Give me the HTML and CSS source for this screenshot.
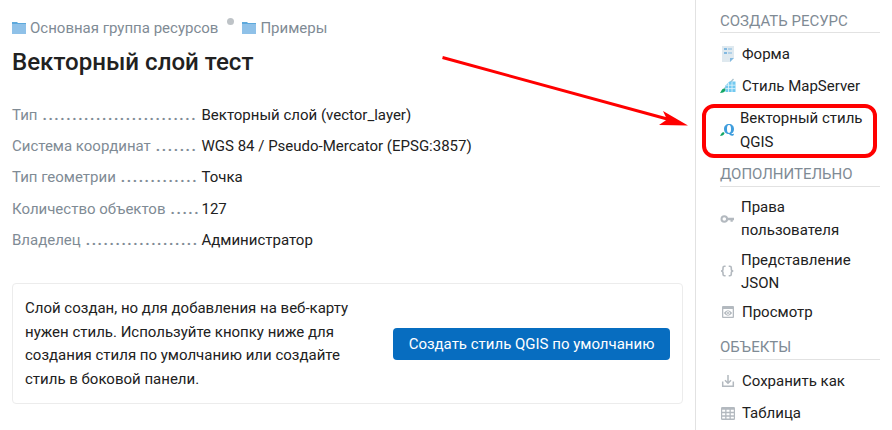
FILE: index.html
```html
<!DOCTYPE html>
<html lang="ru">
<head>
<meta charset="utf-8">
<title>Векторный слой тест</title>
<link rel="stylesheet" href="styles.css">
</head>
<body>
<div class="page">
  <main class="content">
    <nav class="breadcrumbs">
      <a class="crumb"><svg class="folder" viewBox="0 0 14 12"><path fill="#5da9dc" d="M0 0h5l1 1h8v3H0z"/><path fill="#8fc1e8" d="M0 2h14v10H0z"/></svg>Основная группа ресурсов</a>
      <span class="separator"></span>
      <a class="crumb"><svg class="folder" viewBox="0 0 14 12"><path fill="#5da9dc" d="M0 0h5l1 1h8v3H0z"/><path fill="#8fc1e8" d="M0 2h14v10H0z"/></svg>Примеры</a>
    </nav>
    <h1>Векторный слой тест</h1>
    <dl class="props">
      <div class="prop"><dt><span>Тип</span><i class="dots">..........................</i></dt><dd>Векторный слой (vector_layer)</dd></div>
      <div class="prop"><dt><span>Система координат</span><i class="dots">.......</i></dt><dd>WGS 84 / Pseudo-Mercator (EPSG:3857)</dd></div>
      <div class="prop"><dt><span>Тип геометрии</span><i class="dots">.............</i></dt><dd>Точка</dd></div>
      <div class="prop"><dt><span>Количество объектов</span><i class="dots">.....</i></dt><dd>127</dd></div>
      <div class="prop"><dt><span>Владелец</span><i class="dots">...................</i></dt><dd>Администратор</dd></div>
    </dl>
    <section class="notice">
      <p>Слой создан, но для добавления на веб-карту нужен стиль. Используйте кнопку ниже для создания стиля по умолчанию или создайте стиль в боковой панели.</p>
      <button class="primary">Создать стиль QGIS по умолчанию</button>
    </section>
  </main>
  <aside class="sidebar">
    <h2>Создать ресурс</h2>
    <ul class="create">
      <li><svg class="icon" viewBox="0 0 16 16"><path fill="#dfe9ef" d="M2 0h12v12l-4 4H2z"/><path fill="#83b9e0" d="M4 2h3v2H4zM4 6h3v2H4z"/><path stroke="#83b9e0" d="M8 3h4M8 7h4"/><path fill="#83b9e0" d="M10 12h4l-4 4z"/></svg><span>Форма</span></li>
      <li><svg class="icon" viewBox="0 0 16 16"><path stroke="#a9c3ce" stroke-width="1.3" d="M4 11l9.500-10"/><path fill="#72c9f0" d="M5.500 14V7.500L9.500 3.500H15.500V14z"/><path stroke="#e6f6fc" stroke-width=".8" d="M8.500 5v9M12 4v10M6 7.200h9.500M6 10.600h9.500"/><path fill="#13a765" d="M0 15c1.200-1 1.300-4.500 4.500-4.500 2.200 1 .7 4.500-4.500 4.500z"/></svg><span>Стиль MapServer</span></li>
      <li class="wide"><svg class="icon" viewBox="0 0 16 16"><path fill="#3f9ddd" fill-rule="evenodd" d="M9 2c3 0 5 2 5 5 0 2.300-1 3.900-2.700 4.600.7.700 1.500.7 2.500-.1v1.400c-1.700 1.500-3.600.8-4.700-.9C6 12 4 10 4 7s2-5 5-5zm0 1.100C7.300 3.100 7 5 7 7s.3 3.900 2 3.900S11 9 11 7s-.3-3.900-2-3.900z"/><path fill="#13a765" d="M0 14c1-1 1.200-3.700 3.600-3.700C5.600 11 4 14 0 14z"/></svg><span>Векторный стиль QGIS</span></li>
    </ul>
    <h2>Дополнительно</h2>
    <ul class="extra">
      <li class="wide keys"><svg class="icon gray" viewBox="0 0 16 16"><circle cx="4.300" cy="8" r="2.800" fill="none" stroke="#b3b9bf" stroke-width="2"/><path d="M7 6.800h7v2.500h-1.200v1.400h-2.300V9.300H7z"/></svg><span>Права пользователя</span></li>
      <li class="wide json"><svg class="icon" viewBox="0 0 16 16"><path fill="none" stroke="#b3b9bf" stroke-width="1.600" d="M5.600 3.300H4.500q-1.500 0-1.500 1.500v1.500Q3 8 1 8q2 0 2 1.700v1.500q0 1.500 1.500 1.500h1.100M8.700 3.300h1.100q1.500 0 1.500 1.500v1.500Q11.300 8 13.300 8q-2 0-2 1.700v1.500q0 1.500-1.500 1.500H8.700"/></svg><span>Представление JSON</span></li>
      <li><svg class="icon gray" viewBox="0 0 16 16"><path fill-rule="evenodd" d="M3 2h10q1 0 1 1v10q0 1-1 1H3q-1 0-1-1V3q0-1 1-1zm.3 3v7.700h9.400V5z"/><path d="M3.800 9q4.200-5.500 8.400 0-4.200 5.500-8.400 0z"/><circle cx="8" cy="9" r="1.500" fill="#b3b9bf" stroke="#fff" stroke-width=".8"/></svg><span>Просмотр</span></li>
    </ul>
    <h2>Объекты</h2>
    <ul class="objects">
      <li><svg class="icon" viewBox="0 0 16 16"><path fill="none" stroke="#b3b9bf" stroke-width="1.500" d="M2.700 8.500v4.800h10.600V8.500M8 2v8M5 7.200l3 3 3-3"/></svg><span>Сохранить как</span></li>
      <li><svg class="icon gray" viewBox="0 0 16 16"><rect x="1" y="2" width="14" height="13" rx="1.200"/><path stroke="#fff" stroke-width="1.900" stroke-dasharray="3 1.300" d="M2.200 5.800h11.600M2.200 9.200h11.600M2.200 12.600h11.600"/></svg><span>Таблица</span></li>
    </ul>
  </aside>
  <svg class="pointer" viewBox="0 0 892 430"><path stroke="#f00" stroke-width="3" d="M442.500 57.500L670 119.800"/><path fill="#f00" d="M688 125.500L663 111l4 8.500-8 5.500z"/></svg>
  <div class="highlight"></div>
</div>
</body>
</html>
```
FILE: styles.css
```css
* { box-sizing: border-box; }
body { margin: 0; background: #fff; color: #212121; font: 15px/23.6px Roboto, sans-serif; }
.page { position: relative; display: flex; width: 892px; height: 430px; overflow: hidden; }
.content { width: 695px; padding: 17px 12px 0; }
.breadcrumbs { display: flex; height: 24px; color: #7f8b95; }
.crumb { display: flex; align-items: center; gap: 4px; }
.folder { width: 14px; height: 12px; margin-bottom: 2px; }
.separator { width: 7px; height: 7px; margin: 1px 8px 0 9px; border-radius: 50%; background: #bec3c7; }
h1 { margin: 6px 0 22px; font-size: 24.1px; line-height: 31px; font-weight: 500; }
.props { margin: 0; }
.prop { display: flex; height: 31.25px; align-items: center; }
.prop dt { display: flex; gap: 5px; width: 186px; color: #7f8b95; white-space: nowrap; }
.dots { font-style: normal; font-weight: 700; letter-spacing: 1.6px; }
.prop dd { margin: 0 0 0 3.5px; }
.notice { display: flex; align-items: center; justify-content: space-between; width: 671px; height: 121px; margin-top: 27px; padding: 1px 12px 0; border: 1px solid #ececec; border-radius: 4px; }
.notice p { width: 340px; margin: 0; }
.primary { width: 277px; height: 32px; padding: 0; border: 0; border-radius: 4px; background: #076dc0; color: #fff; font: 400 15px Roboto, sans-serif; }
.sidebar { width: 197px; padding: 9px 12px 0 24px; border-left: 1px solid #e2e2e2; }
h2 { height: 24px; margin: 0; border-bottom: 1px solid #e2e2e2; color: #7f8b95; font-size: 15px; line-height: 24.4px; font-weight: 400; text-transform: uppercase; }
ul + h2 { line-height: 22.4px; }
ul { margin: 0; padding: 0; list-style: none; }
li { display: flex; align-items: center; gap: 6px; height: 32px; }
li span { width: 130px; }
.icon { flex: none; width: 16px; height: 16px; margin-bottom: 2px; }
.gray { fill: #b3b9bf; }
.wide { gap: 4px; height: 56px; }
.create { padding-top: 6px; height: 130px; }
.extra { padding-top: 6px; height: 149px; }
.extra .wide { height: 53px; gap: 5px; line-height: 23px; margin-top: -1px; }
.extra .keys .icon { margin-bottom: 0; }
.extra .json { gap: 5px; margin-top: 0; }
.extra li:last-child { margin-top: -1px; }
.objects { padding-top: 6px; }
.pointer { position: absolute; left: 0; top: 0; width: 892px; height: 430px; }
.highlight { position: absolute; left: 702px; top: 104px; width: 175px; height: 54px; border: 4px solid #f00; border-radius: 12px; }
```
